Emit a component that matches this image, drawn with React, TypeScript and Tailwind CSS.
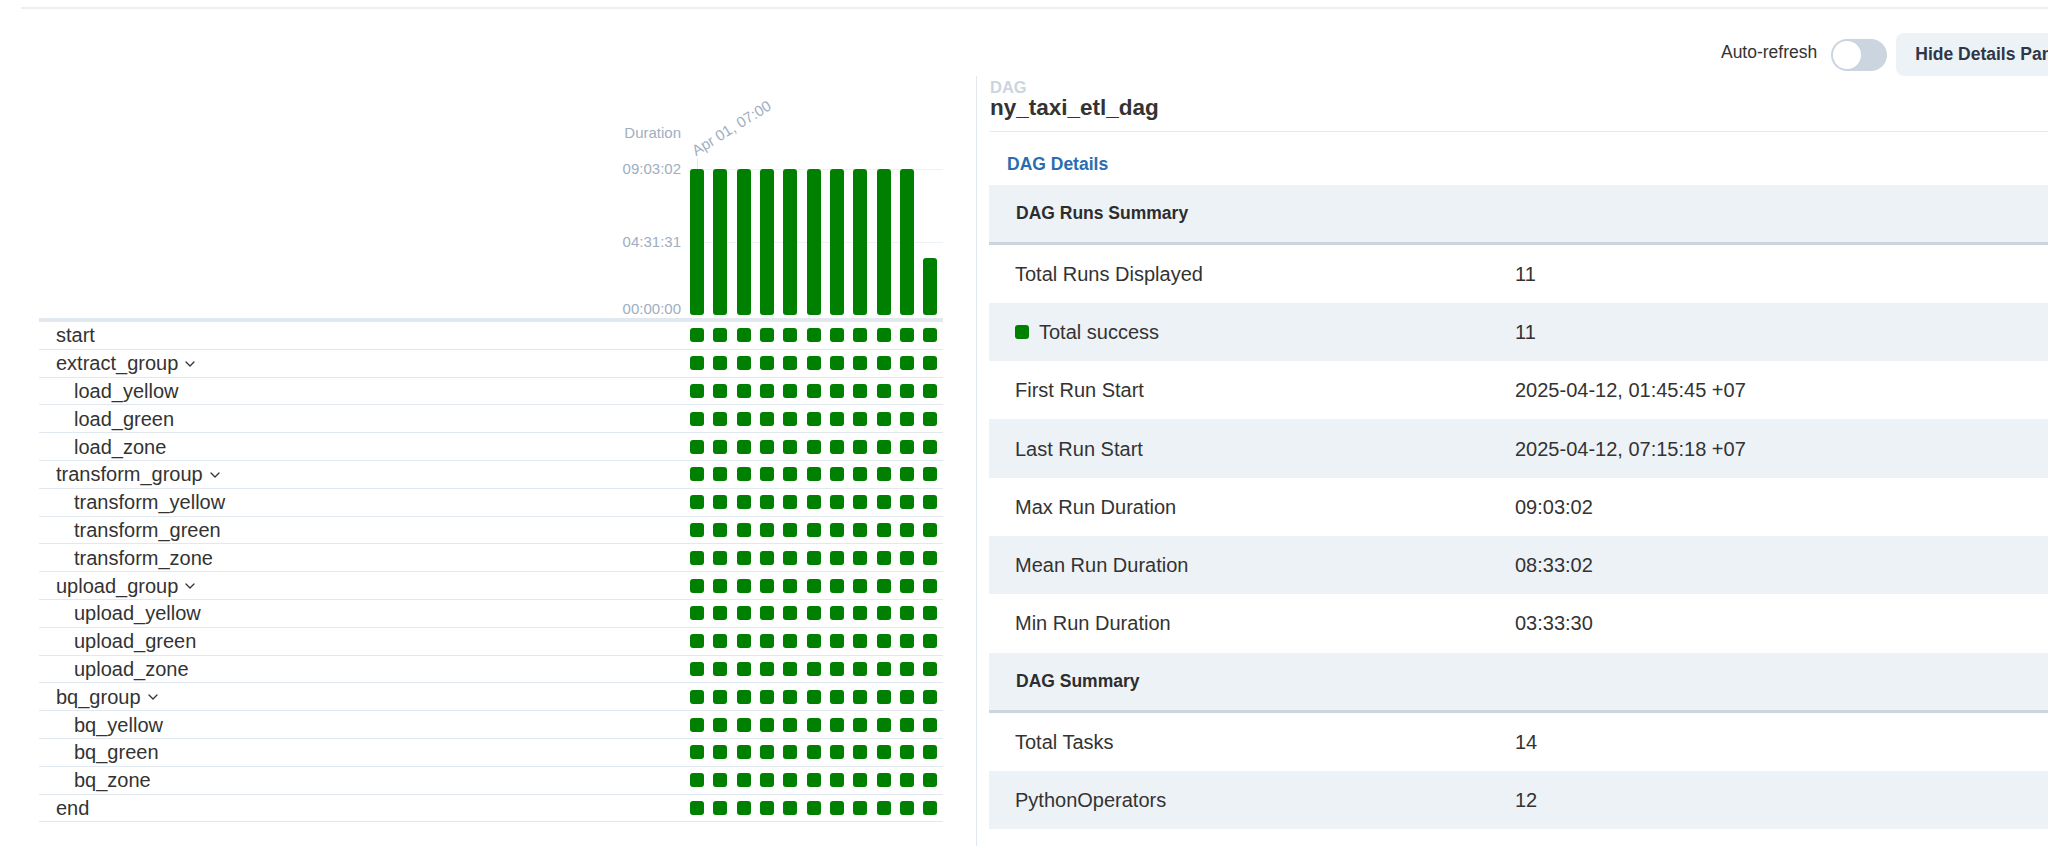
import React from "react";

const tasks = [
  { name: "start", depth: 0 },
  { name: "extract_group", depth: 0, group: true },
  { name: "load_yellow", depth: 1 },
  { name: "load_green", depth: 1 },
  { name: "load_zone", depth: 1 },
  { name: "transform_group", depth: 0, group: true },
  { name: "transform_yellow", depth: 1 },
  { name: "transform_green", depth: 1 },
  { name: "transform_zone", depth: 1 },
  { name: "upload_group", depth: 0, group: true },
  { name: "upload_yellow", depth: 1 },
  { name: "upload_green", depth: 1 },
  { name: "upload_zone", depth: 1 },
  { name: "bq_group", depth: 0, group: true },
  { name: "bq_yellow", depth: 1 },
  { name: "bq_green", depth: 1 },
  { name: "bq_zone", depth: 1 },
  { name: "end", depth: 0 },
];

// run durations in seconds
const runs = [32582, 32582, 32582, 32582, 32582, 32582, 32582, 32582, 32582, 32582, 12810];
const maxDuration = 32582;
const chartHeight = 146;

const runSummary = [
  { label: "Total Runs Displayed", value: "11" },
  { label: "Total success", value: "11", success: true },
  { label: "First Run Start", value: "2025-04-12, 01:45:45 +07" },
  { label: "Last Run Start", value: "2025-04-12, 07:15:18 +07" },
  { label: "Max Run Duration", value: "09:03:02" },
  { label: "Mean Run Duration", value: "08:33:02" },
  { label: "Min Run Duration", value: "03:33:30" },
];

const dagSummary = [
  { label: "Total Tasks", value: "14" },
  { label: "PythonOperators", value: "12" },
];

function Chevron() {
  return (
    <svg width="10" height="6" viewBox="0 0 10 6" className="ml-[7px] mt-[1px]">
      <polyline points="1,1 5,5 9,1" fill="none" stroke="currentColor" strokeWidth="1.3" strokeLinecap="round" strokeLinejoin="round" />
    </svg>
  );
}

function DurationChart() {
  return (
    <div className="h-[246px] flex items-end pb-[3px] border-b-4 border-[#e2e8f0]">
      <div className="flex-1" />
      <div className="relative w-[253px] h-[146px]">
        <span className="absolute right-full mr-[9px] top-[-37px] -translate-y-1/2 text-[15px] leading-none text-[#a0aec0]">Duration</span>
        <span className="absolute right-full mr-[9px] top-[-1px] -translate-y-1/2 text-[15px] leading-none text-[#a0aec0]">09:03:02</span>
        <span className="absolute right-full mr-[9px] top-[72px] -translate-y-1/2 text-[15px] leading-none text-[#a0aec0]">04:31:31</span>
        <span className="absolute right-full mr-[9px] top-[139px] -translate-y-1/2 text-[15px] leading-none text-[#a0aec0]">00:00:00</span>
        <span className="absolute left-[6.5px] top-[-26px] whitespace-nowrap origin-bottom-left -rotate-[32deg] text-[15px] leading-none text-[#a0aec0]">
          Apr 01, 07:00
        </span>
        <div className="absolute left-[7px] top-[-11px] h-[11px] w-px bg-[#e2e8f0]" />
        <div className="absolute left-0 right-0 top-0 h-px bg-[#edf2f7]" />
        <div className="absolute left-0 right-0 top-[73px] h-px bg-[#edf2f7]" />
        <div className="relative flex items-end gap-[9.33px] h-full">
          {runs.map((d, i) => (
            <div
              key={i}
              className="w-[14px] rounded-[3px] bg-[#008000]"
              style={{ height: `${(d / maxDuration) * chartHeight}px` }}
            />
          ))}
        </div>
      </div>
    </div>
  );
}

function TaskRow({ name, depth, group }: { name: string; depth: number; group?: boolean }) {
  return (
    <div className="h-[27.8px] flex items-center border-b border-[#e2e8f0]">
      <div className={`flex-1 flex items-center text-[20px] leading-none ${depth ? "pl-[35px]" : "pl-[17px]"}`}>
        <span>{name}</span>
        {group && <Chevron />}
      </div>
      <div className="w-[253px] flex gap-[9.33px]">
        {runs.map((_, i) => (
          <div key={i} className="w-[14px] h-[14px] rounded-[3px] bg-[#008000]" />
        ))}
      </div>
    </div>
  );
}

function SectionHeader({ title }: { title: string }) {
  return (
    <div className="h-[60px] flex items-center pl-[27px] bg-[#edf2f7] border-b-[3px] border-[#cbd5e0] text-[17.5px] font-bold text-[#2d2d2d]">
      {title}
    </div>
  );
}

function DataRow({ label, value, success, striped }: { label: string; value: string; success?: boolean; striped: boolean }) {
  return (
    <div className={`h-[58.3px] flex items-center text-[20px] ${striped ? "bg-[#edf2f7]" : "bg-white"}`}>
      <div className="w-[526px] pl-[26px] flex items-center">
        {success && <span className="w-[14px] h-[14px] rounded-[3px] bg-[#008000] mr-[10px]" />}
        {label}
      </div>
      <div>{value}</div>
    </div>
  );
}

export default function App() {
  return (
    <div className="w-[2048px] h-[846px] overflow-hidden bg-white text-[#333] font-['Liberation_Sans',Arial,sans-serif]">
      <div className="w-[2086px]">
        <div className="h-[7px]" />
        <div className="ml-[21px] h-[2px] bg-[#eeeeee]" />

        <div className="mt-[24px] h-[43px] flex justify-end items-center">
          <span className="text-[17.5px] text-[#333] mr-[14px] -mt-[4px]">Auto-refresh</span>
          <div className="w-[56px] h-[32px] rounded-full bg-[#cbd5e0] p-[2px] mr-[9px]">
            <div className="w-[28px] h-[28px] rounded-full bg-white" />
          </div>
          <button className="h-[43px] px-[19px] rounded-[8px] bg-[#edf2f7] text-[17.5px] font-bold text-[#2d3748] whitespace-nowrap">
            Hide Details Panel
          </button>
        </div>

        <div className="flex">
          <div className="w-[976px] shrink-0 pl-[39px] pr-[33px]">
            <DurationChart />
            {tasks.map((t) => (
              <TaskRow key={t.name} {...t} />
            ))}
          </div>

          <div className="flex-1 border-l border-[#e2e8f0] pl-[13px] h-[770px]">
            <div className="pt-[3px] pb-[12px] border-b border-[#e2e8f0]">
              <div className="text-[16.5px] leading-none font-bold text-[#cbd5e0]">DAG</div>
              <div className="mt-[1px] text-[22.5px] leading-none font-bold text-[#333]">ny_taxi_etl_dag</div>
            </div>
            <div className="mt-[24px] pl-[17px] text-[17.5px] leading-none font-bold text-[#2b6cb0]">DAG Details</div>
            <div className="mt-[11px] -ml-px">
              <SectionHeader title="DAG Runs Summary" />
              {runSummary.map((r, i) => (
                <DataRow key={r.label} {...r} striped={i % 2 === 1} />
              ))}
              <SectionHeader title="DAG Summary" />
              {dagSummary.map((r, i) => (
                <DataRow key={r.label} {...r} striped={i % 2 === 1} />
              ))}
            </div>
          </div>
        </div>
      </div>
    </div>
  );
}
